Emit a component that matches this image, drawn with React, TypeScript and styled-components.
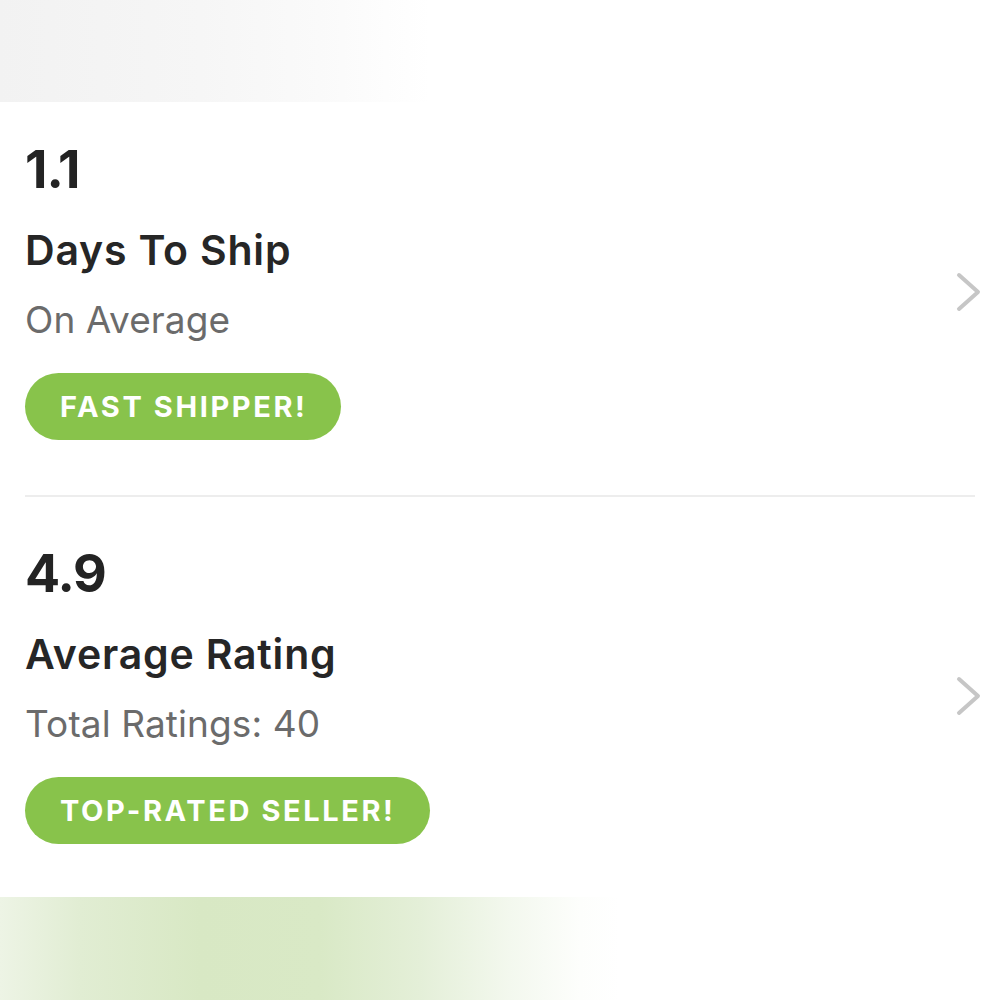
import styled, { createGlobalStyle } from "styled-components";

const GlobalStyle = createGlobalStyle`
  html, body {
    margin: 0;
    padding: 0;
    background: #ffffff;
    font-family: Inter, Lato, "Open Sans", Arial, sans-serif;
  }
`;

const Page = styled.div`
  width: 1000px;
  height: 1000px;
  display: flex;
  flex-direction: column;
  overflow: hidden;
  background: #ffffff;
`;

const TopBand = styled.div`
  height: 102px;
  flex-shrink: 0;
  background: linear-gradient(
    to right,
    #f2f2f2 0%,
    #f6f6f6 20%,
    #fafafa 32%,
    #ffffff 43%
  );
`;

const BottomBand = styled.div`
  flex: 1;
  background: linear-gradient(
    to right,
    #edf4e5 0%,
    #e1edd3 8%,
    #d8e8c4 20%,
    #d9e9c6 32%,
    #e4efd8 42%,
    #f3f8ee 51%,
    #fdfefc 58%,
    #ffffff 62%
  );
`;

const Content = styled.div`
  padding: 0 25px;
  display: flex;
  flex-direction: column;
`;

interface SectionProps {
  first?: boolean;
}

const Section = styled.div<SectionProps>`
  display: flex;
  align-items: center;
  padding: ${(p) => (p.first ? "42px" : "51px")} 0 ${(p) => (p.first ? "55px" : "53px")};
`;

const Info = styled.div`
  flex: 1;
  display: flex;
  flex-direction: column;
  align-items: flex-start;
`;

const Value = styled.div`
  font-size: 52px;
  line-height: 52px;
  font-weight: 700;
  color: #232323;
  letter-spacing: -1px;
`;

const Title = styled.div`
  margin-top: 34px;
  font-size: 41px;
  line-height: 41px;
  font-weight: 600;
  color: #262626;
  letter-spacing: 0.8px;
`;

const Subtitle = styled.div`
  margin-top: 30px;
  font-size: 37px;
  line-height: 37px;
  font-weight: 400;
  color: #6b6b6b;
  letter-spacing: 0.1px;
`;

const Badge = styled.div`
  margin-top: 35px;
  height: 67px;
  padding: 0 34px 0 35px;
  border-radius: 34px;
  background: #88c34b;
  color: #ffffff;
  display: inline-flex;
  align-items: center;
  font-size: 29px;
  font-weight: 700;
  letter-spacing: 2.6px;
`;

const Chevron = styled.svg`
  width: 26px;
  height: 40px;
  margin-right: -7px;
  flex-shrink: 0;
`;

const Divider = styled.div`
  height: 2px;
  background: #ededed;
`;

interface Stat {
  value: string;
  title: string;
  subtitle: string;
  badge: string;
}

const stats: Stat[] = [
  { value: "1.1", title: "Days To Ship", subtitle: "On Average", badge: "FAST SHIPPER!" },
  { value: "4.9", title: "Average Rating", subtitle: "Total Ratings: 40", badge: "TOP-RATED SELLER!" },
];

const App = () => {
  return (
    <>
      <GlobalStyle />
      <Page>
        <TopBand />
        <Content>
          {stats.map((s, i) => (
            <div key={s.title}>
              {i > 0 && <Divider />}
              <Section first={i === 0}>
                <Info>
                  <Value>{s.value}</Value>
                  <Title>{s.title}</Title>
                  <Subtitle>{s.subtitle}</Subtitle>
                  <Badge>{s.badge}</Badge>
                </Info>
                <Chevron viewBox="0 0 26 40">
                  <polyline
                    points="3,3 22,20 3,37"
                    fill="none"
                    stroke="#c6c6c6"
                    strokeWidth="4"
                    strokeLinecap="round"
                    strokeLinejoin="round"
                  />
                </Chevron>
              </Section>
            </div>
          ))}
        </Content>
        <BottomBand />
      </Page>
    </>
  );
};

export default App;
